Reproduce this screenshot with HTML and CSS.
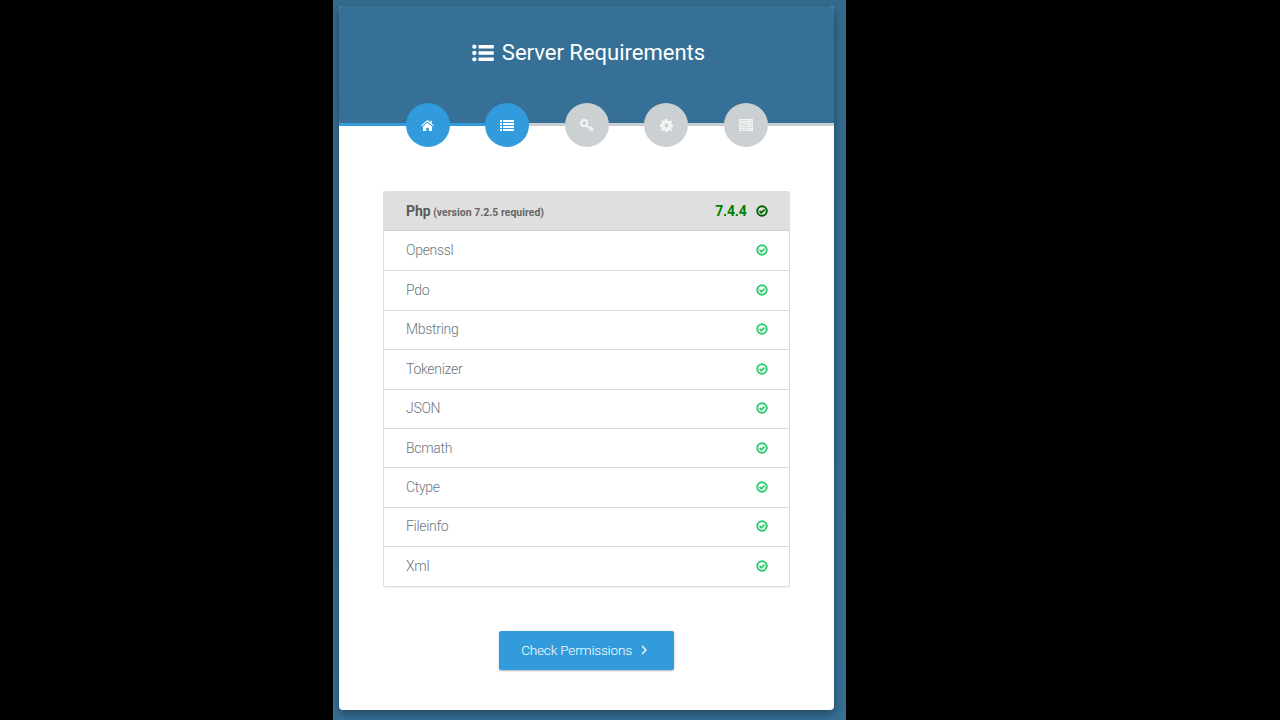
FILE: index.html
```html
<!DOCTYPE html>
<html lang="en">
<head>
    <meta charset="UTF-8">
    <meta name="viewport" content="width=device-width, initial-scale=1.0">
    <title>Server Requirements</title>
    <link rel="stylesheet" href="styles.css">
</head>
<body>
    <svg class="defs" width="0" height="0">
        <symbol id="check" viewBox="0 0 24 24">
            <circle cx="12" cy="12" r="9.5" fill="none" stroke="currentColor" stroke-width="4"/>
            <path d="M7.2 12l3.500 3.500 6.300-6.300" fill="none" stroke="currentColor" stroke-width="3.600"/>
        </symbol>
        <symbol id="list" viewBox="0 0 24 20">
            <circle cx="2.4" cy="3" r="2.4"/><circle cx="2.4" cy="10" r="2.4"/><circle cx="2.4" cy="17" r="2.4"/>
            <rect x="7" y="1" width="17" height="4" rx=".6"/><rect x="7" y="8" width="17" height="4" rx=".6"/><rect x="7" y="15" width="17" height="4" rx=".6"/>
        </symbol>
    </svg>

    <div class="page">
        <div class="card">
            <div class="card-head">
                <h1 class="title"><svg class="title-icon"><use href="#list"/></svg>Server Requirements</h1>
                <ul class="steps">
                    <li class="step active">
                        <svg viewBox="0 0 14 12" width="13" height="11"><path d="M7 0L0 6l.7.8L7 1.6l6.3 5.2.7-.8-2.3-2V.8H10v1.6zM2 7.2V12h3.6V8.4h2.8V12H12V7.2L7 3z"/></svg>
                    </li>
                    <li class="step active">
                        <svg viewBox="0 0 14 11" width="14" height="11"><path d="M0 0h2v2H0zM3 0h11v2H3zM0 3h2v2H0zM3 3h11v2H3zM0 6h2v2H0zM3 6h11v2H3zM0 9h2v2H0zM3 9h11v2H3z"/></svg>
                    </li>
                    <li class="step">
                        <svg viewBox="0 0 14 13" width="14" height="13"><circle cx="4.200" cy="4.200" r="3.100" fill="none" stroke="#f3f4f4" stroke-width="2"/><path d="M6.500 6.500l6 5M10 9.400l1.800-1.800M12 11.200l1.400-1.400" fill="none" stroke="#f3f4f4" stroke-width="2"/></svg>
                    </li>
                    <li class="step">
                        <svg viewBox="0 0 14 14" width="13" height="13"><path fill-rule="evenodd" d="M5.700 0h2.600l.3 1.800 1.100.5L11.300 1.200l1.800 1.800-1.100 1.500.5 1.100 1.500.3v2.600l-1.500.3-.5 1.100 1.100 1.500-1.800 1.800-1.500-1.100-1.100.5-.3 1.800H5.700l-.3-1.800-1.100-.5-1.500 1.100-1.800-1.800 1.100-1.500-.5-1.100L0 8.300V5.700l1.600-.3.500-1.100L1 2.800 2.800 1l1.500 1.100 1.100-.5zM7 4.700a2.300 2.300 0 1 0 0 4.600 2.300 2.300 0 0 0 0-4.600z"/></svg>
                    </li>
                    <li class="step">
                        <svg viewBox="0 0 14 12" width="14" height="12"><path fill-rule="evenodd" d="M0 0h14v3.400H0zM0 4.300h14v3.400H0zM0 8.600h14V12H0zM1 1.300v.8h8v-.8zM1 5.600v.8h8v-.8zM1 9.900v.8h8v-.8zM11.500 1.200v1h1v-1zM11.500 5.500v1h1v-1zM11.500 9.800v1h1v-1z"/></svg>
                    </li>
                </ul>
            </div>

            <div class="card-body">
                <ul class="reqs">
                    <li class="req req-head">
                        <span><b>Php</b> <small>(version 7.2.5 required)</small></span>
                        <span class="php-ok">7.4.4<svg class="tick"><use href="#check"/></svg></span>
                    </li>
                    <li class="req">Openssl<svg class="tick"><use href="#check"/></svg></li>
                    <li class="req">Pdo<svg class="tick"><use href="#check"/></svg></li>
                    <li class="req">Mbstring<svg class="tick"><use href="#check"/></svg></li>
                    <li class="req">Tokenizer<svg class="tick"><use href="#check"/></svg></li>
                    <li class="req">JSON<svg class="tick"><use href="#check"/></svg></li>
                    <li class="req">Bcmath<svg class="tick"><use href="#check"/></svg></li>
                    <li class="req">Ctype<svg class="tick"><use href="#check"/></svg></li>
                    <li class="req">Fileinfo<svg class="tick"><use href="#check"/></svg></li>
                    <li class="req">Xml<svg class="tick"><use href="#check"/></svg></li>
                </ul>
                <div class="actions">
                    <a class="btn" href="#">Check Permissions
                        <svg viewBox="0 0 6 10" width="6" height="10"><path d="M1 1l4 4-4 4" fill="none" stroke="currentColor" stroke-width="1.300"/></svg>
                    </a>
                </div>
            </div>
        </div>
    </div>
</body>
</html>
```

FILE: styles.css
```css
*{margin:0; padding:0; box-sizing:border-box}
html,body{height:100%}
body{background:#000; display:flex; overflow:hidden; font-family:Roboto, "Liberation Sans", sans-serif}
.defs{position:absolute}
ul{list-style:none}

.page{width:513px; height:720px; margin-left:333px; padding:6px 12px 0 6px; background:linear-gradient(#346b8d, #366f95); overflow:hidden}
.card{height:704px; background:#fff; border-radius:4px; box-shadow:0 4px 10px rgba(0,0,0,.35)}

.card-head{height:119px; margin-bottom:22px; padding-top:33px; background:#367096; border-radius:4px 4px 0 0}
.title{display:flex; align-items:center; justify-content:center; height:28px; padding-left:4px; color:#fff; font-size:22px; font-weight:400; line-height:28px}
.title-icon{width:22px; height:18px; margin-right:8px; fill:#fff}

.steps{display:flex; justify-content:center; gap:35.500px; height:44px; margin-top:36px; background:linear-gradient(to right, #329bdb 189px, #c9ced0 189px) 0 20px / 100% 3px no-repeat}
.step{display:flex; align-items:center; justify-content:center; width:44px; height:44px; border-radius:50%; background:#cbd0d2; fill:#f3f4f4}
.step.active{background:#329bdb; fill:#fff}

.card-body{padding:44px 44px 0}
.reqs{border:1px solid #dcdcdc; border-top:0; border-radius:2px; box-shadow:0 1px 1px rgba(0,0,0,.05)}
.req{display:flex; align-items:center; justify-content:space-between; height:39.400px; padding:0 21.500px 1px 22px; border-top:1px solid #dcdcdc; color:#6c757d; font-size:14px; font-weight:300; letter-spacing:-.3px}
.req-head{height:40px; padding-bottom:0; background:#dfdfdf; border-top:0; border-bottom:1px solid #d0d0d0; border-radius:2px 2px 0 0; color:#5a5a5a; letter-spacing:0}
.req-head + .req{border-top:0}
.req-head b{font-weight:700}
.req-head small{margin-left:-1px; font-size:10.500px; font-weight:700; color:#666}
.php-ok{display:flex; align-items:center; gap:9px; color:#008000; font-size:14px; font-weight:700; letter-spacing:-.2px}
.tick{width:12px; height:12px; color:#2ecc71}
.php-ok .tick{color:#006400}

.actions{display:flex; justify-content:center; margin-top:44px}
.btn{display:flex; align-items:center; gap:9px; height:39px; padding:0 27px 0 22px; background:#329bdb; border-radius:2px; box-shadow:0 1px 2px rgba(0,0,0,.3); color:#fff; font-size:13.600px; font-weight:300; letter-spacing:-.2px; text-decoration:none}
```
